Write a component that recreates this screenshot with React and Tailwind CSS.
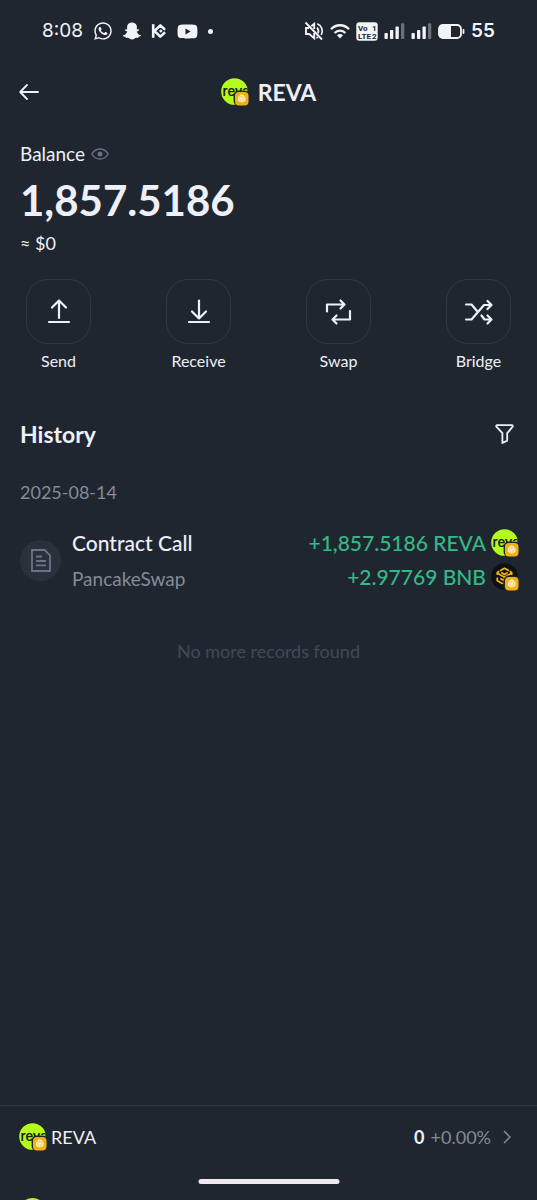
import React from "react";
import { FaWhatsapp, FaSnapchatGhost, FaYoutube } from "react-icons/fa";

const chain = (
  <>
    <rect x="12.6" y="12.6" width="15.4" height="15.4" rx="5" fill="#20262f" />
    <rect x="14" y="14" width="13.5" height="13.5" rx="4" fill="#f0b21c" />
    <path d="M20.7 16.4l3.7 2.1v4.3l-3.7 2.1-3.7-2.1v-4.3z" fill="#ffe9b0" opacity=".6" />
    <path
      d="M18.4 18.2l2.3-1.3 2.3 1.3M17.6 20v2.4l1.6 1M23.8 20v2.4l-1.6 1M18.8 19.6l1.9 1.2 1.9-1.2M20.7 20.8v3"
      fill="none"
      stroke="#fffaf0"
      strokeWidth="1"
    />
  </>
);

function RevaIcon() {
  return (
    <svg viewBox="0 0 28 28" className="size-7 shrink-0" aria-hidden="true">
      <defs>
        <clipPath id="coin">
          <circle cx="13.5" cy="13.5" r="13.3" />
        </clipPath>
      </defs>
      <circle cx="13.5" cy="13.5" r="13.3" fill="#b4fa1e" />
      <text x="1.5" y="18.3" fontSize="13" className="font-['Inter',sans-serif] font-semibold" fill="#17210f" clipPath="url(#coin)">
        reva
      </text>
      {chain}
    </svg>
  );
}

function BnbIcon() {
  return (
    <svg viewBox="0 0 28 28" className="size-7 shrink-0" aria-hidden="true">
      <circle cx="13.5" cy="13.5" r="13.3" fill="#0e1014" />
      <g fill="none" stroke="#f5b70f" strokeWidth="1.7">
        <path d="M9 7.8l4.5-2.6L18 7.8M6.3 12V9.4l2-1.1M20.7 12V9.4l-2-1.1M6.3 14.5v3.2l5.5 3.1" />
        <path d="M6.5 10.2l7 4 7-4M9.3 15.4l4.2 2.4 4.2-2.4M13.5 14v7M10.3 9.6l3.2 1.8 3.2-1.8" />
      </g>
      {chain}
    </svg>
  );
}

function Signal() {
  return (
    <svg viewBox="0 0 21 16" className="h-4 w-[21px] shrink-0" fill="#f2f4f8" aria-hidden="true">
      <rect x="0.5" y="10" width="3.3" height="6" rx=".8" />
      <rect x="6" y="7" width="3.3" height="9" rx=".8" />
      <rect x="11.5" y="3.5" width="3.3" height="12.5" rx=".8" />
      <rect x="17" y="0.3" width="3.3" height="15.7" rx=".8" fill="#69707c" />
    </svg>
  );
}

function StatusBar() {
  return (
    <div className="flex h-[62px] items-center justify-between px-[42px] text-[#f2f4f8]">
      <div className="flex items-center gap-[10px]">
        <span className="font-['Inter',sans-serif] text-[19px] leading-6">8:08</span>
        <FaWhatsapp className="size-5" />
        <FaSnapchatGhost className="size-[18px]" />
        <svg viewBox="0 0 16 16" className="size-4" fill="none" stroke="currentColor" strokeWidth="2.6" aria-hidden="true">
          <path d="M2.2 1.2v13.6" />
          <path d="M3.5 8l5.8-5.6 4 3.6M3.5 8l5.8 5.6 4-3.6" strokeLinecap="round" strokeLinejoin="round" />
          <path d="M9.8 6.2L11.6 8 9.8 9.8 8 8z" fill="currentColor" stroke="none" />
        </svg>
        <FaYoutube className="size-[21px]" />
        <span className="size-[5px] rounded-full bg-[#f2f4f8]" />
      </div>
      <div className="flex items-center gap-1.5">
        <svg viewBox="0 0 20 20" className="size-5" fill="none" stroke="currentColor" strokeWidth="1.9" aria-hidden="true">
          <path d="M5.2 7H2v6h3.2l5 4.3V12M7.3 5.2l2.9-2.5v5.2" />
          <path d="M13 6.7c1.6 1.6 1.8 3.8 1 5.6M13.3 2.8c4.6 1.8 6.1 7 3.9 11M12.4 16.9l1.6-.7" strokeWidth="1.7" />
          <path d="M1.5 1.5l16.5 17" />
        </svg>
        <svg viewBox="0 0 20 16" className="h-4 w-5" aria-hidden="true">
          <g fill="none" stroke="currentColor" strokeWidth="2.4">
            <path d="M1 6.2c5-5.3 13-5.3 18 0" />
            <path d="M4.6 10c3-3.2 7.8-3.2 10.8 0" />
          </g>
          <path d="M7 12.3c1.7-1.7 4.3-1.7 6 0l-3 3.1z" fill="currentColor" />
        </svg>
        <svg viewBox="0 0 22 19" className="h-[19px] w-[22px]" aria-hidden="true">
          <rect x="0.3" y="0.3" width="21.4" height="18.4" rx="3" fill="#f2f4f8" />
          <g fill="#20262f" fontSize="8" className="font-['Liberation_Sans_Narrow','Roboto',sans-serif] font-bold">
            <text x="2" y="8.5">Vo</text>
            <text x="16" y="8.5">1</text>
            <text x="2" y="16.7">LTE</text>
            <text x="16" y="16.7">2</text>
          </g>
        </svg>
        <Signal />
        <Signal />
        <svg viewBox="0 0 27 15" className="h-[15px] w-[27px]" aria-hidden="true">
          <rect x="1" y="1" width="22" height="13" rx="4" fill="none" stroke="currentColor" strokeWidth="1.8" />
          <path d="M4 1h9v13H4a3 3 0 0 1-3-3V4a3 3 0 0 1 3-3z" fill="currentColor" />
          <rect x="24.6" y="5" width="1.8" height="5" rx=".9" fill="currentColor" />
        </svg>
        <span className="font-['Inter',sans-serif] text-[19px] font-semibold leading-6">55</span>
      </div>
    </div>
  );
}

const actions = [
  { label: "Send", d: "M16 22V4.5M9 11.5l7-7 7 7M6 26h20" },
  { label: "Receive", d: "M16 4.5v18M9 15.5l7 7 7-7M6 26h20" },
  { label: "Swap", d: "M4 15.5V8.5h16.5M17.5 4.5l4 4-4 4M27 15v8.5H10.5M13.5 19.5l-4 4 4 4" },
  { label: "Bridge", d: "M3 8.5h5.5L14 15M3 23.5h5.5L21 9h7M24.5 5l4 4-4 4M18.5 19.5l3 4H28M24.5 19.5l4 4-4 4" },
];

export default function App() {
  return (
    <div className="relative flex min-h-screen flex-col bg-[#20262f] font-['Lato','Liberation_Sans',sans-serif] text-[#edf0f8]">
      <StatusBar />
      <header className="grid h-[60px] grid-cols-[1fr_auto_1fr] items-center px-[19px]">
        <button type="button" aria-label="Back" className="w-5">
          <svg viewBox="0 0 20 16" className="h-4 w-5" fill="none" stroke="currentColor" strokeWidth="1.8" strokeLinecap="round" strokeLinejoin="round">
            <path d="M19 8H1.2M8 1L1.2 8 8 15" />
          </svg>
        </button>
        <div className="flex items-center gap-[9px]">
          <RevaIcon />
          <h1 className="text-[23px] font-bold leading-7">REVA</h1>
        </div>
      </header>

      <main className="flex flex-col px-5 pt-[19px]">
        <div className="flex items-center gap-1.5 text-[19px] leading-[26px]">
          Balance
          <button type="button" aria-label="Hide balance">
            <svg viewBox="0 0 18 12" className="h-3 w-[18px] text-[#697181]" fill="none" stroke="currentColor" strokeWidth="1.4">
              <path d="M.8 6C5 -.7 13 -.7 17.2 6 13 12.7 5 12.7.8 6z" />
              <circle cx="9" cy="6" r="1.8" fill="currentColor" />
            </svg>
          </button>
        </div>
        <p className="mt-2 text-[42px] font-bold leading-[50px]">1,857.5186</p>
        <p className="mt-1.5 text-[18px] leading-6">≈ $0</p>

        <div className="mt-6 flex justify-between px-1.5">
          {actions.map((a) => (
            <button type="button" key={a.label} className="flex w-[65px] flex-col items-center gap-[5px] text-[16px] leading-6">
              <span className="flex size-[65px] items-center justify-center rounded-[22px] border border-[#323943]">
                <svg viewBox="0 0 32 32" className="size-8" fill="none" stroke="currentColor" strokeWidth="2.2" strokeLinecap="round" strokeLinejoin="round" aria-hidden="true">
                  <path d={a.d} />
                </svg>
              </span>
              {a.label}
            </button>
          ))}
        </div>

        <div className="mt-[47px] flex items-center justify-between">
          <h2 className="text-[23px] font-bold leading-7">History</h2>
          <button type="button" aria-label="Filter" className="mr-[3px]">
            <svg viewBox="0 0 19 20" className="h-5 w-[19px]" fill="none" stroke="currentColor" strokeWidth="1.8" strokeLinejoin="round">
              <path d="M2.2 1.2h14.6c.9 0 1.2.9.8 1.5l-5.4 6.5v7.4L7.4 19V9.2L1.4 2.7c-.5-.6-.1-1.5.8-1.5z" />
            </svg>
          </button>
        </div>

        <p className="mt-8 text-[18px] leading-6 text-[#848b96]">2025-08-14</p>

        <div className="mt-[25px] flex items-center">
          <span className="flex size-[41px] shrink-0 items-center justify-center rounded-full bg-[#2a313c]">
            <svg viewBox="0 0 20 23" className="h-[23px] w-5 text-[#697485]" fill="none" stroke="currentColor" strokeWidth="1.8" aria-hidden="true">
              <path d="M1 1h12.6L19 6.4V22H1zM5 7.5h6M5 12h10M5 16.3h10" />
            </svg>
          </span>
          <div className="ml-[11px] flex-1">
            <p className="text-[21px] font-medium leading-7">Contract Call</p>
            <p className="mt-2.5 text-[19px] leading-6 text-[#848b96]">PancakeSwap</p>
          </div>
          <div className="-mr-0.5 flex flex-col items-end gap-1.5 self-start text-[21px] font-medium leading-7 text-[#35b888]">
            <div className="flex items-center gap-[5px]">
              +1,857.5186 REVA
              <RevaIcon />
            </div>
            <div className="flex items-center gap-[5px]">
              +2.97769 BNB
              <BnbIcon />
            </div>
          </div>
        </div>

        <p className="mt-12 text-center text-[18px] leading-6 text-[#414958]">No more records found</p>
      </main>

      <footer className="mt-auto flex h-[95px] flex-col overflow-hidden border-t border-[#303741]">
        <a href="#reva" className="flex h-[62px] shrink-0 items-center pl-[19px] pr-[26px]">
          <RevaIcon />
          <span className="ml-1 flex-1 text-[18px] leading-6">REVA</span>
          <span className="mr-1.5 text-[18px] font-bold leading-6">0</span>
          <span className="text-[18px] leading-6 text-[#848b96]">+0.00%</span>
          <svg viewBox="0 0 8 14" className="ml-3 h-3.5 w-2 text-[#848b96]" fill="none" stroke="currentColor" strokeWidth="1.5" aria-hidden="true">
            <path d="M1 1l6 6-6 6" />
          </svg>
        </a>
        <span className="ml-[19px] mt-[30px] size-[27px] shrink-0 rounded-full bg-[#b4fa1e]" />
      </footer>
      <span className="absolute bottom-4 left-1/2 h-[5px] w-[141px] -translate-x-1/2 rounded-full bg-[#f0e9f2]" />
    </div>
  );
}
